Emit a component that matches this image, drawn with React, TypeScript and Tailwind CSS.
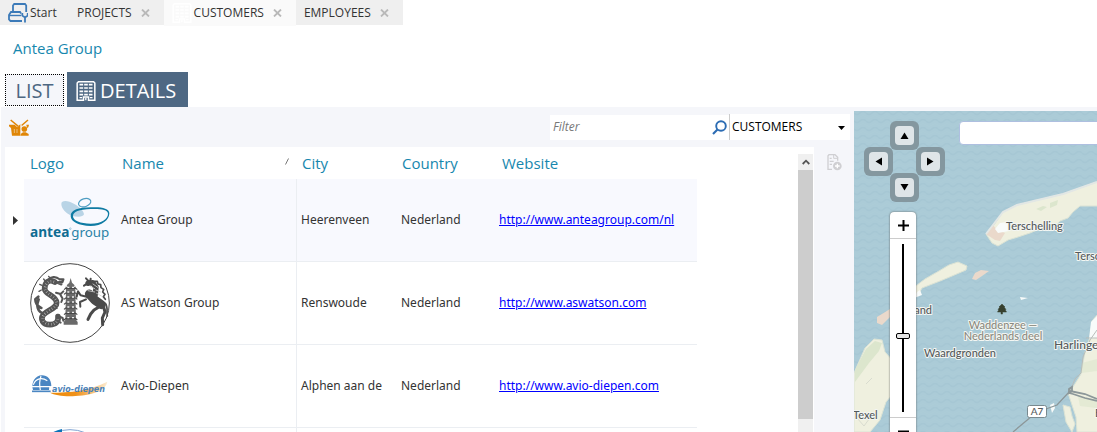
import type { ReactNode } from "react";

function BuildingIcon({ className }: { className: string }) {
  return (
    <svg viewBox="0 0 57 60" className={className} fill="none" stroke="currentColor" aria-hidden="true">
      <path d="M2 58V6l4-4h45l4 4v52H36V48H21v10z" strokeWidth="4.500" />
      <path d="M9 11h11M23 11h11M37 11h11M9 21h11M23 21h11M37 21h11M9 31h11M23 31h11M37 31h11M9 41h11M23 41h11M37 41h11" strokeWidth="5" />
      <path d="M9 50h8M40 50h8M28 50v8" strokeWidth="4" />
    </svg>
  );
}

function StartIcon() {
  return (
    <svg viewBox="0 0 20 20" className="h-5 w-5" fill="none" stroke="#3c7ab8" strokeWidth="1.800" aria-hidden="true">
      <path d="M5 8V2.500L6.200 1H17l1.200 1.500V9" />
      <path d="M13 10.500L12 9H3l-2 3v4.500L2.500 18H14" />
      <path d="M1 12.500h12" strokeWidth="1.400" />
      <path d="M14.300 10v2.500l2.700 2 2.700-2V10M17 14.500v5" strokeWidth="1.800" />
    </svg>
  );
}

function BasketIcon() {
  return (
    <svg viewBox="0 0 60 51" className="h-[17px] w-5" fill="#e08606" aria-hidden="true">
      <path d="M0 17h17l8 8 7-8h4v33H9L6 27 0 22z" />
      <path d="M5 3l23 19M57 3L36 21" stroke="#e08606" strokeWidth="4.500" />
      <path d="M52 17h8l-2 8-4 2z" />
      <path d="M34 18h4v32h-4z" fill="#f5f6fa" />
      <circle cx="46" cy="30" r="8.500" />
      <path d="M35 50v-5l7-5h8l9 5v5z" />
      <path d="M16 30v12M24 30v12" stroke="#f5f6fa" strokeWidth="1.500" />
    </svg>
  );
}

function AddDocumentIcon() {
  return (
    <svg viewBox="0 0 45 51" className="h-[17px] w-[15px]" aria-hidden="true">
      <path d="M15 46H3V5l3-3h18l8 8v10" fill="none" stroke="#cfcfd2" strokeWidth="4" />
      <path d="M8 13h6M8 22h12M8 31h7" stroke="#cfcfd2" strokeWidth="4" />
      <path d="M20 2v11h12" fill="none" stroke="#cfcfd2" strokeWidth="3" />
      <circle cx="31" cy="36" r="13" fill="#cfcfd2" />
      <path d="M31 29v14M24 36h14" stroke="#fff" strokeWidth="4" />
    </svg>
  );
}

function CloseIcon() {
  return (
    <svg viewBox="0 0 9 8" className="h-2 w-[9px]" aria-hidden="true">
      <path d="M1 .5l7 7M8 .5l-7 7" stroke="#b9b9b9" strokeWidth="1.800" />
    </svg>
  );
}

function SearchIcon() {
  return (
    <svg viewBox="0 0 15 15" className="h-[15px] w-[15px]" fill="none" stroke="#2c6cb3" aria-hidden="true">
      <circle cx="9" cy="6" r="4.800" strokeWidth="1.900" />
      <path d="M5.500 9.500L1 14" strokeWidth="2.200" />
    </svg>
  );
}

function AnteaLogo() {
  return (
    <svg viewBox="0 0 240 240" className="block h-20 w-20" role="img" aria-label="Antea Group logo">
      <path d="M94 72c0-12 20-11 39 0 18 10 29 23 29 31-2 9-22 9-36 4-20-7-32-23-32-35z" fill="#b9d4e6" />
      <ellipse cx="164" cy="68" rx="19" ry="12" transform="rotate(-18 164 68)" fill="none" stroke="#4f9dc2" strokeWidth="3.500" />
      <path
        fillRule="evenodd"
        d="M238 100c0 20-22 38-56 38-36-1-60-13-60-30 0-18 25-26 60-26 30-2 56 2 56 18zm-4 1c0-13-24-15-52-14-35 1-53 9-53 21 0 14 22 23 53 23 32 0 52-14 52-30z"
        fill="#0f7ba3"
      />
      <text x="0" y="170" fontFamily="Noto Sans, sans-serif" fontWeight="700" fontSize="41" fill="#0f6c92">antea</text>
      <text x="124" y="170" fontFamily="Noto Sans, sans-serif" fontSize="40" fill="#2b82a6">group</text>
      <circle cx="121" cy="146" r="2.500" fill="none" stroke="#2b82a6" />
    </svg>
  );
}

function WatsonLogo() {
  const tiers = [88, 102, 117, 132, 147, 163, 179];
  return (
    <svg viewBox="18 15 240 240" className="block h-20 w-20" role="img" aria-label="AS Watson Group logo">
      <circle cx="138" cy="135" r="118" fill="#fff" stroke="#444" strokeWidth="3" />
      <g fill="none" stroke="#555" strokeLinecap="round" strokeLinejoin="round">
        <path d="M92 72C74 62 62 74 62 92c0 18 34 20 36 42 1 16-26 22-40 36-10 14-2 30 20 30 18 0 26-10 24-24" strokeWidth="17" />
        <path d="M72 66c8-10 24-12 34-2l12 0-3 8-17 1 14 6" strokeWidth="7" />
        <path d="M60 166c-20-2-24-26-16-42M52 150c-14-4-18-20-18-26l9-8" strokeWidth="8" />
        <path d="M96 104l14 4 8-8M108 108l8 14-4 10M102 174l14 6 2 8M98 188l12 6" strokeWidth="6" />
        <path d="M54 82l-7-3M52 96l-7 4M64 70l-5-7M78 60l-4-5M92 146l7 5M76 160l-2-7" strokeWidth="4" />
        <path d="M90 72C76 66 64 76 63 92c2 18 33 22 35 42 0 14-25 23-38 36-9 13-2 28 18 29 16 0 24-9 23-21" stroke="#c4c4c4" strokeWidth="8" strokeDasharray="1.500 7" strokeLinecap="butt" />
        <path d="M100 66l4 1" stroke="#fff" strokeWidth="3" />
      </g>
      <path d="M140 60l4 14 8 8-4 6h-16l-4-6 8-8zM124 86h32l-2 8 2 92 5 6v8h-42v-8l5-6 2-92z" fill="#6a6a6a" />
      {tiers.map((y) => (
        <g key={y}>
          <path d={`M120 ${y + 7}l5-4h30l5 4`} stroke="#484848" strokeWidth="3.500" fill="none" />
          <path d={`M130 ${y}h6M144 ${y}h6`} stroke="#eee" strokeWidth="4" />
        </g>
      ))}
      <g fill="none" stroke="#4a4a4a" strokeLinecap="round" strokeLinejoin="round">
        <path d="M194 74l-14 9M196 72l-10-11M199 70l1-8" strokeWidth="6" />
        <path d="M192 76l14-2 10 14-2 22" strokeWidth="16" />
        <path d="M196 108l16 18 20 14" strokeWidth="27" />
        <path d="M188 116l-18-4-8-12-4 16M186 124l-18 8 1 14" strokeWidth="6" />
        <path d="M226 146l-16 10-10 12-8 16M238 144l5 18-8 18 1 20" strokeWidth="9" />
        <path d="M212 70l8 0 2 8 8 2 1 9 8 5-3 8 7 7-5 7 6 8" strokeWidth="5" />
        <path d="M244 136c9 12 3 26 6 38" strokeWidth="5" />
        <path d="M198 84l14 8M192 98l20 4M207 78l14 10M216 96l14 6M218 106l14 8" stroke="#d0d0d0" strokeWidth="2.500" />
      </g>
    </svg>
  );
}

function AvioLogo() {
  return (
    <svg viewBox="18 -66 240 240" className="block h-20 w-20" role="img" aria-label="Avio-Diepen logo">
      <defs>
        <linearGradient id="swoosh" x1="0" x2="1">
          <stop offset="0" stopColor="#ec8a0a" />
          <stop offset=".45" stopColor="#f0921a" />
          <stop offset="1" stopColor="#fdecd2" />
        </linearGradient>
      </defs>
      <path d="M78 74c60 0 120-6 172-33-4 22-34 40-96 43-32 2-62-2-76-10z" fill="url(#swoosh)" />
      <path d="M27 66C20 44 34 22 54 22c16 0 28 12 28 32l-6 1-1 11H27z" fill="#4a86c2" />
      <path d="M28 50c8-20 26-22 42-12M24 56h54M51 24c-5 14-6 22-2 42" fill="none" stroke="#fff" strokeWidth="3.500" />
      <path d="M24 70h56" stroke="#4a86c2" strokeWidth="5" />
      <text x="84" y="71" fontFamily="DejaVu Sans, sans-serif" fontStyle="italic" fontWeight="700" fontSize="24" fill="#4d83b8">avio-diepen</text>
    </svg>
  );
}

function BlueLogo() {
  return (
    <svg viewBox="0 0 240 240" className="block h-20 w-20" role="img" aria-label="Company logo">
      <circle cx="120" cy="120" r="118" fill="#fff" stroke="#7fa3d2" strokeWidth="3" />
      <path d="M96 0v60L20 64C38 28 64 6 96 0z" fill="#0a73b8" />
    </svg>
  );
}

function Tab({ label, active, icon }: { label: string; active?: boolean; icon?: ReactNode }) {
  return (
    <div className={active ? "flex h-[26px] items-center gap-1.5 bg-[#fafafa] pr-2.5 pl-2" : "flex h-[25px] items-center gap-1.5 bg-[#efefef] pr-2.5 pl-2"}>
      <button type="button" className="flex items-center">
        {icon}
        {label}
      </button>
      <button type="button" aria-label={`Close ${label}`} className="flex w-4 justify-center">
        <CloseIcon />
      </button>
    </div>
  );
}

type Customer = { name: string; city: string; country: string; website: string; logo: ReactNode };

const customers: Customer[] = [
  { name: "Antea Group", city: "Heerenveen", country: "Nederland", website: "http://www.anteagroup.com/nl", logo: <AnteaLogo /> },
  { name: "AS Watson Group", city: "Renswoude", country: "Nederland", website: "http://www.aswatson.com", logo: <WatsonLogo /> },
  { name: "Avio-Diepen", city: "Alphen aan de", country: "Nederland", website: "http://www.avio-diepen.com", logo: <AvioLogo /> },
  { name: "", city: "", country: "", website: "", logo: <BlueLogo /> },
];

function CustomerTable() {
  return (
    <table className="w-[692px] table-fixed border-separate border-spacing-0 text-left">
      <colgroup>
        <col className="w-[19px]" />
        <col className="w-[91px]" />
        <col className="w-[182px]" />
        <col className="w-[98px]" />
        <col className="w-[98px]" />
        <col />
      </colgroup>
      <thead>
        <tr className="h-8 text-[15px] text-[#1787ae]">
          <th aria-label="Current row" />
          <th className="pl-1.5 font-normal">Logo</th>
          <th className="pr-2 pl-[7px] font-normal">
            <span className="flex items-center justify-between">
              Name
              <svg viewBox="0 0 4 7" className="mb-1 h-[7px] w-1" aria-hidden="true">
                <path d="M.5 6.500L3.500.5" stroke="#777" />
              </svg>
            </span>
          </th>
          <th className="pl-[5px] font-normal">City</th>
          <th className="pl-[7px] font-normal">Country</th>
          <th className="pl-[9px] font-normal">Website</th>
        </tr>
      </thead>
      <tbody className="font-['Noto_Sans',sans-serif]">
        {customers.map((c, i) => (
          <tr
            key={i}
            className={
              i === 0
                ? "h-[83px] [&>td]:border-[#ebeef2] [&>td:not(:first-child)]:border-b [&>td:not(:first-child)]:bg-[#f8f9fe]"
                : "h-[83px] [&>td]:border-[#ebeef2] [&>td:not(:first-child)]:border-b"
            }
          >
            <td>
              {i === 0 && (
                <svg viewBox="0 0 5 9" className="ml-2 h-[9px] w-[5px]" aria-label="Current row">
                  <path d="M0 0l5 4.500L0 9z" fill="#333" />
                </svg>
              )}
            </td>
            <td className="p-0 pl-1.5">{c.logo}</td>
            <td className="border-r pl-1.5">{c.name}</td>
            <td className="pl-1 whitespace-nowrap">{c.city}</td>
            <td className="pl-1.5">{c.country}</td>
            <td className="pl-1.5">
              {c.website && (
                <a href={c.website} className="text-[#0000ff] underline">{c.website}</a>
              )}
            </td>
          </tr>
        ))}
      </tbody>
    </table>
  );
}

function PanButton({ label, place, path }: { label: string; place: string; path: string }) {
  return (
    <button type="button" aria-label={label} className={`absolute h-[29px] w-[29px] rounded-md bg-[#84979f] p-[5px] ${place}`}>
      <span className="flex h-[19px] w-[19px] items-center justify-center rounded bg-[#dfe5e8]">
        <svg viewBox="0 0 9 9" className="h-[9px] w-[9px]" aria-hidden="true"><path d={path} /></svg>
      </span>
    </button>
  );
}

function MapDrawing() {
  return (
    <svg className="absolute inset-0 h-full w-full" aria-label="Map of the Wadden Sea" role="img">
      <defs>
        <pattern id="waves" width="12" height="8" patternUnits="userSpaceOnUse">
          <rect width="12" height="8" fill="#abcbd7" />
          <path d="M0 2q3 3 6 0t6 0" fill="none" stroke="#a6c7d4" strokeWidth="1.500" />
          <path d="M0 6q3 3 6 0t6 0" fill="none" stroke="#adcdd8" strokeWidth="1" />
        </pattern>
      </defs>
      <rect width="100%" height="100%" fill="url(#waves)" />
      <g transform="translate(-854 -111)">
        <g fill="#eff0df" stroke="#dbe3d5" strokeWidth="1">
          <path d="M986 234l8-9 9-13 14-7 46-11 34-12 60-20v44h-77l-7 6-5 6-8 3-4 4-6-2-8 5-12 5-12 4-10 3-10 6-6-3z" />
          <path d="M904 302l8-13 13-10 14-8 10-6 9-3 9 4-1 4-14 6-12 5-18 7-4 7-8 4z" />
          <path d="M854 373l11-25 9-9 8 1 3 12 9 10 2 28-10 12-6 18-10 12h-16z" />
          <path d="M1160 300l-62 14-6 7-2 16-5 15-4 22-8 13-5 6 4 12 4 12 1 15h83z" />
          <path d="M1063 405l7 2 2 9 3 8-3 8-6-10z" />
        </g>
        <g fill="#dce6cd">
          <path d="M855 370l11-21 9-8 7 2-3 8-10 12-14 19z" />
          <path d="M1036 209l7-3 4 1-6 4zM1050 203l8-3-1 5-7 3z" />
          <path d="M1082 363l15-4v12l-16 2zM1078 396l19 4v8l-17-2z" opacity=".6" />
        </g>
        <g fill="#ead9cb">
          <path d="M986 234l7-9 4 5 8 3-5 8-5-1z" />
          <path d="M972 279l3-6 6-3 8 1-7 5-6 4z" />
          <path d="M877 317l13-8v8l-8 8-5-2z" />
        </g>
        <g fill="#f8fbfa">
          <path d="M995 229l5-6 8-1 1 9-11 2zM1020 297l8 1-7 2zM1050 405l2 8 3-5-1-5zM1091 322l6-6v22l-8 1z" />
          <path d="M866 384l5-6M917 292l3-2 2 5-8 3z" />
        </g>
        <path d="M986 234l17-22 14-7 46-11 34-12" fill="none" stroke="#e2e7e5" strokeWidth="2" />
        <g fill="none" stroke="#8c9799" strokeWidth="1.300">
          <path d="M1013 432l19-16 14-7 11-4 13-14" />
          <path d="M1070 391l5-12 6-6 2-16 7-17 7-10M1086 338h11" stroke="#b8bdb9" strokeWidth="1" />
          <path d="M1069 393v-4l3-2v4zl4 1 12 4 12 3" strokeWidth="1.800" />
          <path d="M1070 391l15 3 12 5" strokeWidth="1.800" />
          <path d="M857 418l7 8 8-11M866 384l6-6" stroke="#d9dccf" strokeWidth="1" />
        </g>
        <path d="M1002 304l3 3h-1l2 2.500h-1l1.500 2.500h-4v2h-1.500v-2h-3.500l1.500-2.500h-1l2-2.500h-1z" fill="#37402f" stroke="#37402f" strokeWidth=".5" />
        <rect x="1027.500" y="405.500" width="19" height="12" rx="2" fill="#fff" stroke="#78898f" />
        <g
          fontFamily="Lato, sans-serif"
          fontSize="11"
          fontWeight="500"
          fill="#555a5c"
          stroke="#f3f6f3"
          strokeWidth="2"
          strokeLinejoin="round"
          className="[paint-order:stroke]"
        >
          <text x="1006" y="230">Terschelling</text>
          <text x="1075" y="260">Terschelling</text>
          <text x="893" y="314">Vlieland</text>
          <text x="1003" y="329" textAnchor="middle" fill="#8b8a80">Waddenzee —</text>
          <text x="1003" y="340" textAnchor="middle" fill="#8b8a80">Nederlands deel</text>
          <text x="924" y="357">Waardgronden</text>
          <text x="1054" y="349" fontSize="12">Harlingen</text>
          <text x="853" y="419">Texel</text>
          <text x="1095" y="417">Bolsward</text>
          <text x="1037" y="415" textAnchor="middle" fontSize="10" stroke="none">A7</text>
        </g>
      </g>
    </svg>
  );
}

function MapPanel() {
  return (
    <section aria-label="Map" className="relative mt-1 overflow-hidden bg-[#abccd8]">
      <MapDrawing />
      <PanButton label="Pan left" place="top-9 left-2.5" path="M1.500 4.500L8 .5v8z" />
      <PanButton label="Pan right" place="top-9 left-[62px]" path="M7.500 4.500L1 .5v8z" />
      <PanButton label="Pan up" place="top-2.5 left-9" path="M4.500 1.500L.5 8h8z" />
      <PanButton label="Pan down" place="top-[62px] left-9" path="M4.500 7.500L.5 1h8z" />
      <div className="absolute top-[101px] left-9 flex w-[26px] flex-col items-center rounded bg-white shadow-[0_0_2px_#555]">
        <button type="button" aria-label="Zoom in" className="flex h-[27px] w-full items-center justify-center border-b border-[#ccc]">
          <svg viewBox="0 0 11 11" className="h-[11px] w-[11px]" aria-hidden="true"><path d="M5.500 0v11M0 5.500h11" stroke="#000" strokeWidth="2" /></svg>
        </button>
        <input
          type="range"
          aria-label="Zoom level"
          defaultValue={55}
          className="mt-[5px] mb-[5px] h-[168px] w-[14px] appearance-none bg-[linear-gradient(90deg,transparent_6px,#000_6px,#000_8px,transparent_8px)] [writing-mode:vertical-lr] [&::-webkit-slider-thumb]:h-[6px] [&::-webkit-slider-thumb]:w-[14px] [&::-webkit-slider-thumb]:appearance-none [&::-webkit-slider-thumb]:rounded-xs [&::-webkit-slider-thumb]:border [&::-webkit-slider-thumb]:border-black [&::-webkit-slider-thumb]:bg-[#e6e6e6]"
        />
        <button type="button" aria-label="Zoom out" className="flex h-[27px] w-full items-center justify-center border-t border-[#ccc]">
          <svg viewBox="0 0 11 11" className="h-[11px] w-[11px]" aria-hidden="true"><path d="M0 5.500h11" stroke="#000" strokeWidth="2" /></svg>
        </button>
      </div>
      <input type="text" aria-label="Search location" className="absolute top-2.5 -right-1 left-[105px] h-6 rounded border border-[#aebfe0] bg-white px-2" />
    </section>
  );
}

export default function App() {
  return (
    <div className="flex h-screen flex-col overflow-hidden bg-white font-['Open_Sans','Noto_Sans',sans-serif] text-[12px] text-[#333]">
      <nav aria-label="Open pages" className="flex h-[26px] items-start">
        <button type="button" className="flex h-[25px] w-[69px] items-center gap-0.5 bg-[#efefef] pl-2">
          <StartIcon />
          Start
        </button>
        <Tab label="PROJECTS" />
        <Tab label="CUSTOMERS" active icon={<BuildingIcon className="mr-0.5 h-5 w-5 text-white" />} />
        <Tab label="EMPLOYEES" />
      </nav>
      <h1 className="mt-3 pl-[13px] text-[15px] leading-5 text-[#1787ae]">Antea Group</h1>
      <div className="mt-3.5 flex h-[35px] items-end gap-[3px] pl-[5px] text-xl">
        <button type="button" className="mb-px flex h-8 w-[59px] items-center justify-center border border-dotted border-black bg-[#f5f6fa] pt-0.5 text-[#4d6782]">
          LIST
        </button>
        <button type="button" className="flex h-[35px] items-center gap-1 bg-[#4e6883] pt-0.5 pr-3 pl-[9px] text-white">
          <BuildingIcon className="h-5 w-5" />
          DETAILS
        </button>
      </div>
      <main className="ml-px grid min-h-0 flex-1 grid-cols-[853fr_243fr] bg-[#f5f6fa]">
        <section aria-label="Customers" className="flex min-h-0 min-w-0 flex-col">
          <div className="flex h-10 shrink-0 items-center justify-between pr-1 pl-2">
            <button type="button" aria-label="Add to basket"><BasketIcon /></button>
            <div className="flex items-center">
              <div className="flex h-[25px] w-[179px] items-center bg-white pr-0.5">
                <input type="text" aria-label="Filter" placeholder="Filter" className="min-w-0 flex-1 pl-[3px] placeholder:text-[#777] placeholder:italic" />
                <button type="button" aria-label="Search"><SearchIcon /></button>
              </div>
              <div className="relative h-[26px] w-[121px] bg-white">
                <select aria-label="Search in" className="h-full w-full appearance-none border-l border-[#ccc] pl-0.5 text-black">
                  <option>CUSTOMERS</option>
                </select>
                <svg viewBox="0 0 7 4" className="pointer-events-none absolute top-3 right-[5px] h-1 w-[7px]" aria-hidden="true"><path d="M0 0h7L3.500 4z" /></svg>
              </div>
            </div>
          </div>
          <div className="flex min-h-0 flex-1 pl-1">
            <div className="flex min-w-0 flex-1 justify-between overflow-hidden bg-white pr-px">
              <CustomerTable />
              <div className="mt-[7px] flex w-[15px] flex-col bg-[#f0f0f0]">
                <button type="button" aria-label="Scroll up" className="flex h-[17px] items-center justify-center">
                  <svg viewBox="0 0 8 6" className="h-1.5 w-2" aria-hidden="true"><path d="M.7 5L4 1.700 7.300 5" fill="none" stroke="#555" strokeWidth="1.800" /></svg>
                </button>
                <div className="h-[95%] bg-[#cdcdcd]" />
                <div className="h-[5%]" />
              </div>
            </div>
            <div className="flex w-10 items-start justify-center pt-[7px]">
              <button type="button" aria-label="Add document" disabled><AddDocumentIcon /></button>
            </div>
          </div>
        </section>
        <MapPanel />
      </main>
    </div>
  );
}
